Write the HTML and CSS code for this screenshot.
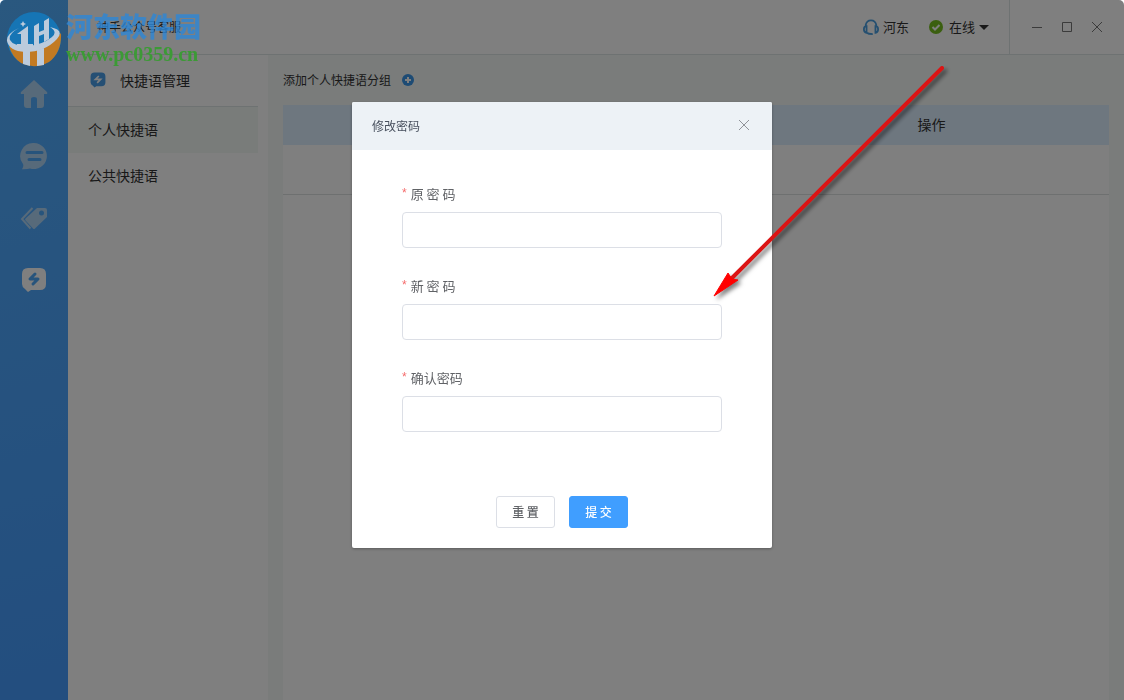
FILE: index.html
```html
<!DOCTYPE html>
<html lang="zh-CN">
<head>
  <meta charset="UTF-8">
  <meta name="viewport" content="width=device-width, initial-scale=1.0">
  <title>神手公众号客服</title>
  <link rel="stylesheet" href="styles.css">
</head>
<body>
  <div class="app">
    <nav class="sidebar">
      <a href="#home" aria-label="首页">
        <svg width="28" height="28" viewBox="0 0 28 28"><path d="M14 0 1 12q-1 2 1 2h2v11q0 3 3 3h4v-9q0-2 3-2t3 2v9h4q3 0 3-3V14h2q2 0 1-2z"/></svg>
      </a>
      <a href="#chat" aria-label="会话">
        <svg width="28" height="28" viewBox="0 0 28 28"><path d="M14 1a13 13 0 1 1-4 25.400q-2 .9-8 .8 2-3 1-5.200A13 13 0 0 1 14 1z"/><path class="line" d="M7 10.500h15M9 17.500h11"/></svg>
      </a>
      <a href="#tags" aria-label="标签">
        <svg width="28" height="28" viewBox="0 0 28 28"><path d="M17 4h8q2 0 2 2v7L15 24.500q-1 1-2 0l-7.500-8q-1-1 0-2z"/><path class="edge" d="M12.500 4 2 15l8.500 9.500"/><circle class="hole" cx="21.500" cy="9" r="2.500"/></svg>
      </a>
      <a class="active" href="#phrases" aria-label="快捷语">
        <svg width="28" height="28" viewBox="0 0 28 28"><path d="M8 2h12q6 0 6 6v10q0 6-6 6H11l-3 2-3-3q-3-2-3-5V8q0-6 6-6z"/><path class="bolt" d="m15 8-5 5h8l-5 5"/></svg>
      </a>
    </nav>

    <div class="main">
      <header class="topbar">
        <h1>神手公众号客服</h1>
        <div class="user">
          <svg width="16" height="16" viewBox="0 0 18 18"><path d="M3 8.500V7q1-5.500 6-5.500T15 7v1.500M4 8v7.500Q1 15 1 11.500T4 8zM14 8v7.500q3-.5 3-4T14 8zM4 15.500q2 1.500 7 1.500"/></svg>
          <span>河东</span>
        </div>
        <div class="status">
          <svg width="14" height="14" viewBox="0 0 14 14"><circle cx="7" cy="7" r="7"/><path d="m3.500 7 2.500 2.500 4.500-4.500"/></svg>
          <select aria-label="状态">
            <option>在线</option>
            <option>离线</option>
          </select>
        </div>
        <div class="window-buttons">
          <button type="button" aria-label="最小化"><svg width="12" height="12" viewBox="0 0 12 12"><path d="M1 6.500h10"/></svg></button>
          <button type="button" aria-label="最大化"><svg width="12" height="12" viewBox="0 0 12 12"><path d="M1.500 1.500h9v9h-9z"/></svg></button>
          <button type="button" aria-label="关闭"><svg width="12" height="12" viewBox="0 0 12 12"><path d="m1 1 10 10M11 1 1 11"/></svg></button>
        </div>
      </header>

      <div class="columns">
        <aside class="menu">
          <h2>
            <svg width="16" height="16" viewBox="0 0 28 28"><path d="M8 1h12q7 0 7 7v10q0 7-7 7H11l-3 2-3-3q-4-2-4-6V8q0-7 7-7z"/><path class="bolt" d="m15.500 7-6 6h9l-6 6"/></svg>
            快捷语管理
          </h2>
          <a class="selected" href="#personal">个人快捷语</a>
          <a href="#public">公共快捷语</a>
        </aside>

        <main class="content">
          <div class="add-group">
            <span>添加个人快捷语分组</span>
            <button type="button" aria-label="添加分组"><svg width="12" height="12" viewBox="0 0 12 12"><circle cx="6" cy="6" r="6"/><path d="M6 3v6M3 6h6"/></svg></button>
          </div>
          <div class="panel">
            <table>
              <thead>
                <tr><th class="name"></th><th>操作</th></tr>
              </thead>
              <tbody>
                <tr><td></td><td></td></tr>
              </tbody>
            </table>
          </div>
        </main>
      </div>
    </div>
  </div>

  <div class="overlay">
    <div class="dialog" role="dialog" aria-modal="true" aria-labelledby="dialogTitle">
      <div class="dialog-header">
        <h2 id="dialogTitle">修改密码</h2>
        <button type="button" aria-label="关闭"><svg width="12" height="12" viewBox="0 0 12 12"><path d="m1 1 10 10M11 1 1 11"/></svg></button>
      </div>
      <form class="dialog-body">
        <div class="field">
          <label for="oldPassword">原 密 码</label>
          <input id="oldPassword" type="password">
        </div>
        <div class="field">
          <label for="newPassword">新 密 码</label>
          <input id="newPassword" type="password">
        </div>
        <div class="field">
          <label for="confirmPassword">确认密码</label>
          <input id="confirmPassword" type="password">
        </div>
        <div class="actions">
          <button type="reset">重 置</button>
          <button class="primary" type="button">提 交</button>
        </div>
      </form>
      <!-- red pointer -->
      <svg class="arrow" width="250" height="250" viewBox="0 0 250 250">
        <path class="shaft" d="M232 17 22 227"/>
        <path class="head" d="M4 245 18 222l4 6 6 1z"/>
      </svg>
    </div>
  </div>

  <!-- site watermark -->
  <div class="watermark">
    <svg width="60" height="60" viewBox="0 0 60 60">
      <circle class="sky" cx="30" cy="31" r="27"/>
      <path class="sun" d="M5 38q18 7 34 0 12-5 18-13Q58 44 45 54q-14 8-28 1Q8 49 5 38z"/>
      <path class="white" d="M15 20Q2 26 3 33q2 10 18 11 20 0 32-13 8-9-7-12 8 5 2 10-10 8-24 9-15 0-18-6-2-6 9-12z"/>
      <path class="white" d="m13 26 11-8v18h5v2H13v-2h4V26zM30 18l5-3v9l5-2V13l5-3v21l-5 3v-8l-5 2v9h-5zM19 43h7v15l-7-2zM33 42l7-2v17l-7 1z"/>
      <path class="white" d="m19 13 1 2 2 1-2 1-1 2-1-2-2-1 2-1z"/>
    </svg>
    <div>
      <strong>河东软件园</strong>
      <span>www.pc0359.cn</span>
    </div>
  </div>
</body>
</html>
```

FILE: styles.css
```css
* {
  box-sizing: border-box;
}
body {
  margin: 0;
  background: #fff;
  color: #333;
  font-family: "Noto Sans CJK SC", sans-serif;
  font-size: 14px;
}
h1, h2 {
  margin: 0;
  font-weight: normal;
}
a {
  color: inherit;
  text-decoration: none;
}
button {
  padding: 0;
  border: none;
  background: none;
  font-family: inherit;
  cursor: pointer;
}
svg {
  display: block;
  fill: none;
}
.app {
  display: flex;
  min-height: 100vh;
  overflow: hidden;
  border-radius: 5px 5px 0 0;
}

/* left bar */
.sidebar {
  display: flex;
  flex-direction: column;
  align-items: center;
  gap: 34px;
  width: 68px;
  padding-top: 80px;
  background: linear-gradient(165deg, #54b0ff, #469cff);
}
.sidebar a {
  color: #aed4f4;
}
.sidebar .active {
  color: #fff;
}
.sidebar svg {
  fill: currentColor;
}
.sidebar .line,
.sidebar .bolt {
  fill: none;
  stroke: #4fa8f8;
  stroke-width: 3;
  stroke-linecap: round;
  stroke-linejoin: round;
}
.sidebar .edge {
  fill: none;
  stroke: currentColor;
  stroke-width: 2;
}
.sidebar .hole {
  fill: #4fa8f8;
}

.main {
  display: flex;
  flex: 1;
  flex-direction: column;
}

/* top bar */
.topbar {
  display: flex;
  align-items: center;
  height: 55px;
  padding-left: 29px;
  border-bottom: 1px solid #dce4e4;
  font-size: 13px;
}
.topbar h1 {
  flex: 1;
  padding-bottom: 2px;
  font-size: 12px;
}
.user {
  display: flex;
  align-items: center;
  gap: 4px;
  margin-right: 20px;
}
.user svg {
  stroke: #4a9fe0;
  stroke-width: 2;
}
.user span {
  padding-bottom: 2px;
}
.status {
  display: flex;
  align-items: center;
  gap: 6px;
  position: relative;
  margin-right: 20px;
}
.status circle {
  fill: #76bf20;
}
.status path {
  stroke: #fff;
  stroke-width: 2;
}
.status select {
  width: 40px;
  padding: 0 0 2px;
  border: none;
  background: none;
  color: inherit;
  font-family: inherit;
  font-size: 13px;
  appearance: none;
}
.status::after {
  content: "";
  position: absolute;
  right: 0;
  border: 5px solid transparent;
  border-top-color: #333;
  border-bottom: none;
}
.window-buttons {
  display: flex;
  align-items: center;
  align-self: stretch;
  padding: 0 12px;
  border-left: 1px solid #dce4e4;
}
.window-buttons button {
  display: grid;
  place-items: center;
  width: 30px;
  height: 30px;
}
.window-buttons svg {
  stroke: #777;
}

.columns {
  display: flex;
  flex: 1;
}

/* second level menu */
.menu {
  width: 200px;
  padding-right: 10px;
}
.menu h2 {
  display: flex;
  align-items: center;
  gap: 14px;
  height: 52px;
  padding: 0 0 2px 22px;
  border-bottom: 1px solid #dce4e4;
  font-size: 14px;
}
.menu h2 path {
  fill: #4a9fe8;
}
.menu h2 .bolt {
  fill: none;
  stroke: #fff;
  stroke-width: 3;
}
.menu a {
  display: block;
  padding: 0 0 2px 20px;
  line-height: 44px;
}
.menu .selected {
  background: #f2f8f5;
}

/* content */
.content {
  display: flex;
  flex: 1;
  flex-direction: column;
  padding: 0 15px;
  background: #f4f8f7;
}
.add-group {
  display: flex;
  align-items: center;
  gap: 11px;
  height: 50px;
  font-size: 12px;
}
.add-group span {
  padding-bottom: 2px;
}
.add-group circle {
  fill: #3a96e8;
}
.add-group path {
  stroke: #fff;
  stroke-width: 2;
}
.panel {
  flex: 1;
  background: #fff;
}
table {
  width: 100%;
  border-collapse: collapse;
}
th {
  height: 40px;
  padding: 0 0 2px;
  background: #dceeff;
  font-weight: normal;
}
.name {
  width: 57%;
}
td {
  height: 49px;
  padding: 0;
  border-bottom: 1px solid #dce0e0;
}

/* dialog */
.overlay {
  position: fixed;
  inset: 0;
  border-radius: 5px 5px 0 0;
  background: rgba(0, 0, 0, 0.5);
}
.dialog {
  position: relative;
  width: 420px;
  margin: 102px auto 0;
  border-radius: 2px;
  background: #fff;
  box-shadow: 0 1px 3px rgba(0, 0, 0, 0.3);
}
.dialog-header {
  display: flex;
  align-items: center;
  justify-content: space-between;
  height: 48px;
  padding: 0 22px 2px 20px;
  border-radius: 2px 2px 0 0;
  background: #edf2f6;
}
.dialog-header h2 {
  color: #48505e;
  font-size: 12px;
}
.dialog-header svg {
  stroke: #909399;
}
.dialog-body {
  padding: 26px 50px 20px;
}
.field {
  margin-bottom: 20px;
}
.field label {
  display: flex;
  align-items: center;
  gap: 4px;
  height: 36px;
  padding-bottom: 2px;
  color: #606266;
  font-size: 13px;
}
.field label::before {
  content: "*";
  color: #f56c6c;
  font-family: "Liberation Sans", sans-serif;
  font-size: 12px;
}
.field input {
  display: block;
  width: 100%;
  height: 36px;
  padding: 0 15px;
  border: 1px solid #dcdfe6;
  border-radius: 4px;
}
.actions {
  display: flex;
  justify-content: center;
  gap: 14px;
  padding-top: 44px;
}
.actions button {
  width: 59px;
  height: 32px;
  padding-bottom: 2px;
  border: 1px solid #dcdfe6;
  border-radius: 3px;
  color: #606266;
  font-size: 12px;
  font-weight: 500;
}
.actions .primary {
  border-color: #409eff;
  background: #409eff;
  color: #fff;
}
.arrow {
  position: absolute;
  top: -51px;
  left: 358px;
  pointer-events: none;
  filter: drop-shadow(3px 3px 2px rgba(0, 0, 0, 0.5));
}
.shaft {
  stroke: #dc1414;
  stroke-width: 4;
  stroke-linecap: round;
}
.head {
  fill: #f00;
  stroke: #f00;
}

/* watermark */
.watermark {
  display: flex;
  align-items: center;
  gap: 2px;
  position: absolute;
  top: 8px;
  left: 4px;
  pointer-events: none;
}
.watermark strong {
  display: block;
  color: rgba(45, 135, 215, 0.8);
  font-size: 27px;
  font-weight: 900;
  line-height: 32px;
}
.watermark span {
  display: block;
  color: #3c9a36;
  font-family: "Liberation Serif", serif;
  font-size: 20px;
  font-weight: bold;
  line-height: 24px;
}
.sky {
  fill: #1675b5;
}
.sun {
  fill: #c27a22;
}
.white {
  fill: #bccbdc;
}
```
